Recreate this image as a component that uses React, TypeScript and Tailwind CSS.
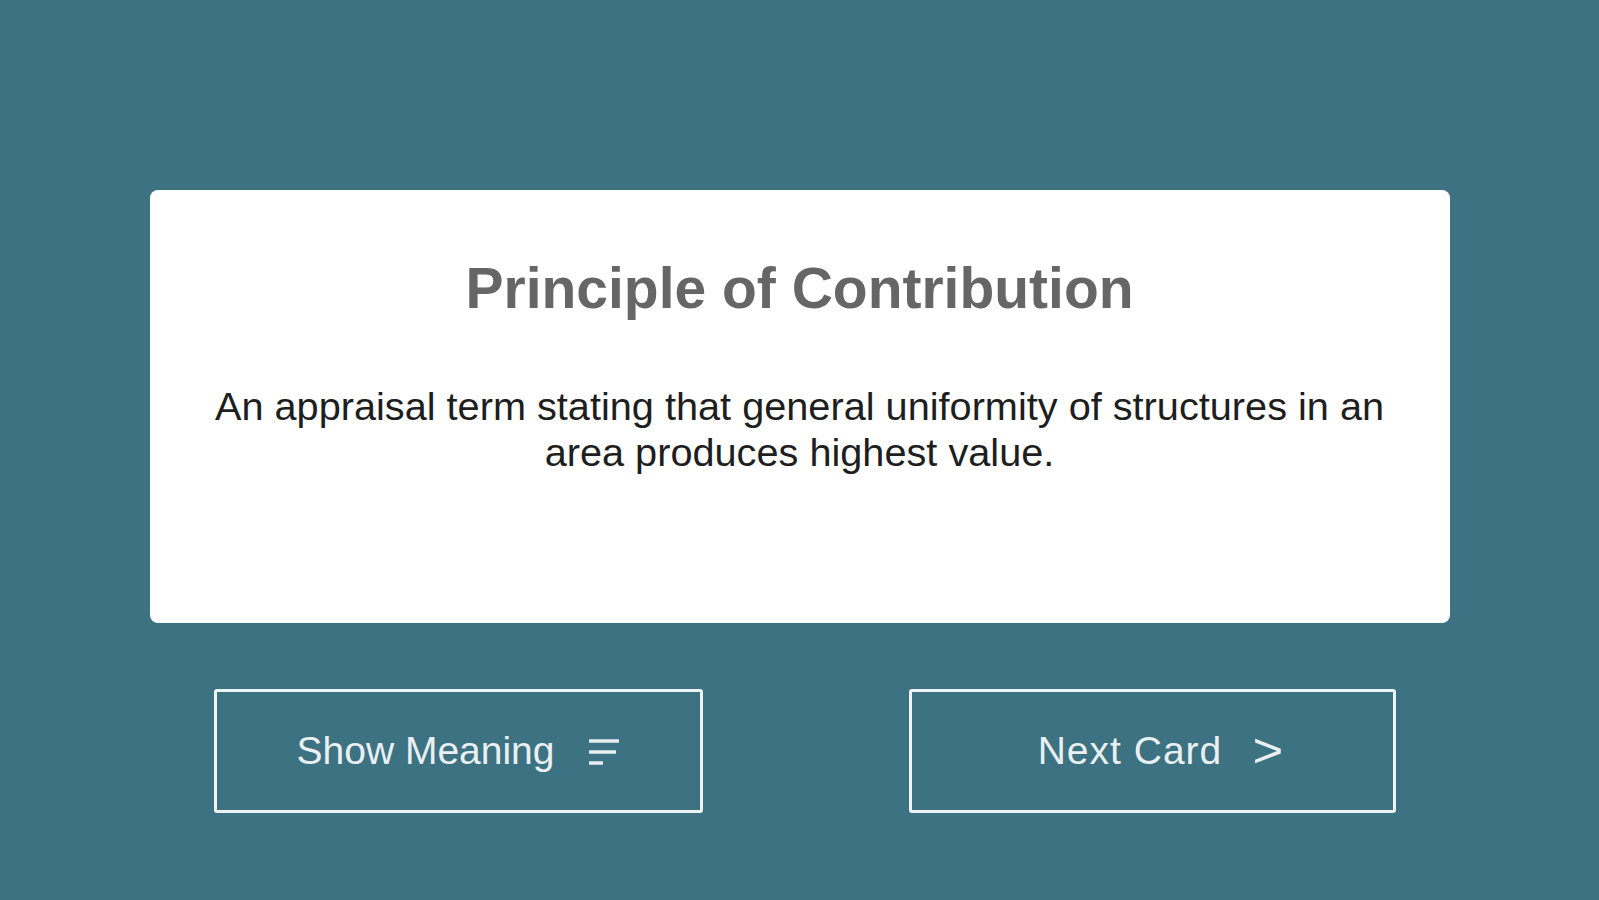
export default function App() {
  return (
    <div className="min-h-[900px] w-full bg-[#3d7283] font-['Liberation_Sans',Arial,sans-serif]">
      <div className="flex flex-col pt-[190px]">
        {/* card */}
        <div className="mx-auto w-[1300px] h-[433px] rounded-[8px] bg-white px-[48px] pt-[70px] text-center">
          <h1 className="text-[57px] leading-none font-bold text-[#666666]">
            Principle of Contribution
          </h1>
          <p className="mt-[66px] text-[39.7px] leading-[46px] text-[#1e1e1e]">
            An appraisal term stating that general uniformity of structures in an area produces highest value.
          </p>
        </div>

        {/* buttons */}
        <div className="mx-auto mt-[66px] flex w-[1300px] gap-[206px] pl-[64px]">
          <button className="flex h-[124px] w-[489px] items-center justify-center rounded-[3px] border-[3px] border-[#eef3f4] text-[39px] text-[#eaf0f2]">
            <span>Show Meaning</span>
            <svg className="ml-[33px] mt-[1px]" width="32" height="30" viewBox="0 0 32 30" fill="none" stroke="#eaf0f2" strokeWidth="3.5">
              <line x1="1" y1="4" x2="31" y2="4" />
              <line x1="1" y1="15" x2="28" y2="15" />
              <line x1="1" y1="26" x2="15" y2="26" />
            </svg>
          </button>
          <button className="flex h-[124px] w-[487px] items-center justify-center rounded-[3px] border-[3px] border-[#eef3f4] pl-[16px] text-[39px] text-[#eaf0f2]">
            <span className="tracking-[1px]">Next Card</span>
            <span className="ml-[32px] scale-x-110 text-[48px] leading-none">&gt;</span>
          </button>
        </div>
      </div>
    </div>
  );
}
